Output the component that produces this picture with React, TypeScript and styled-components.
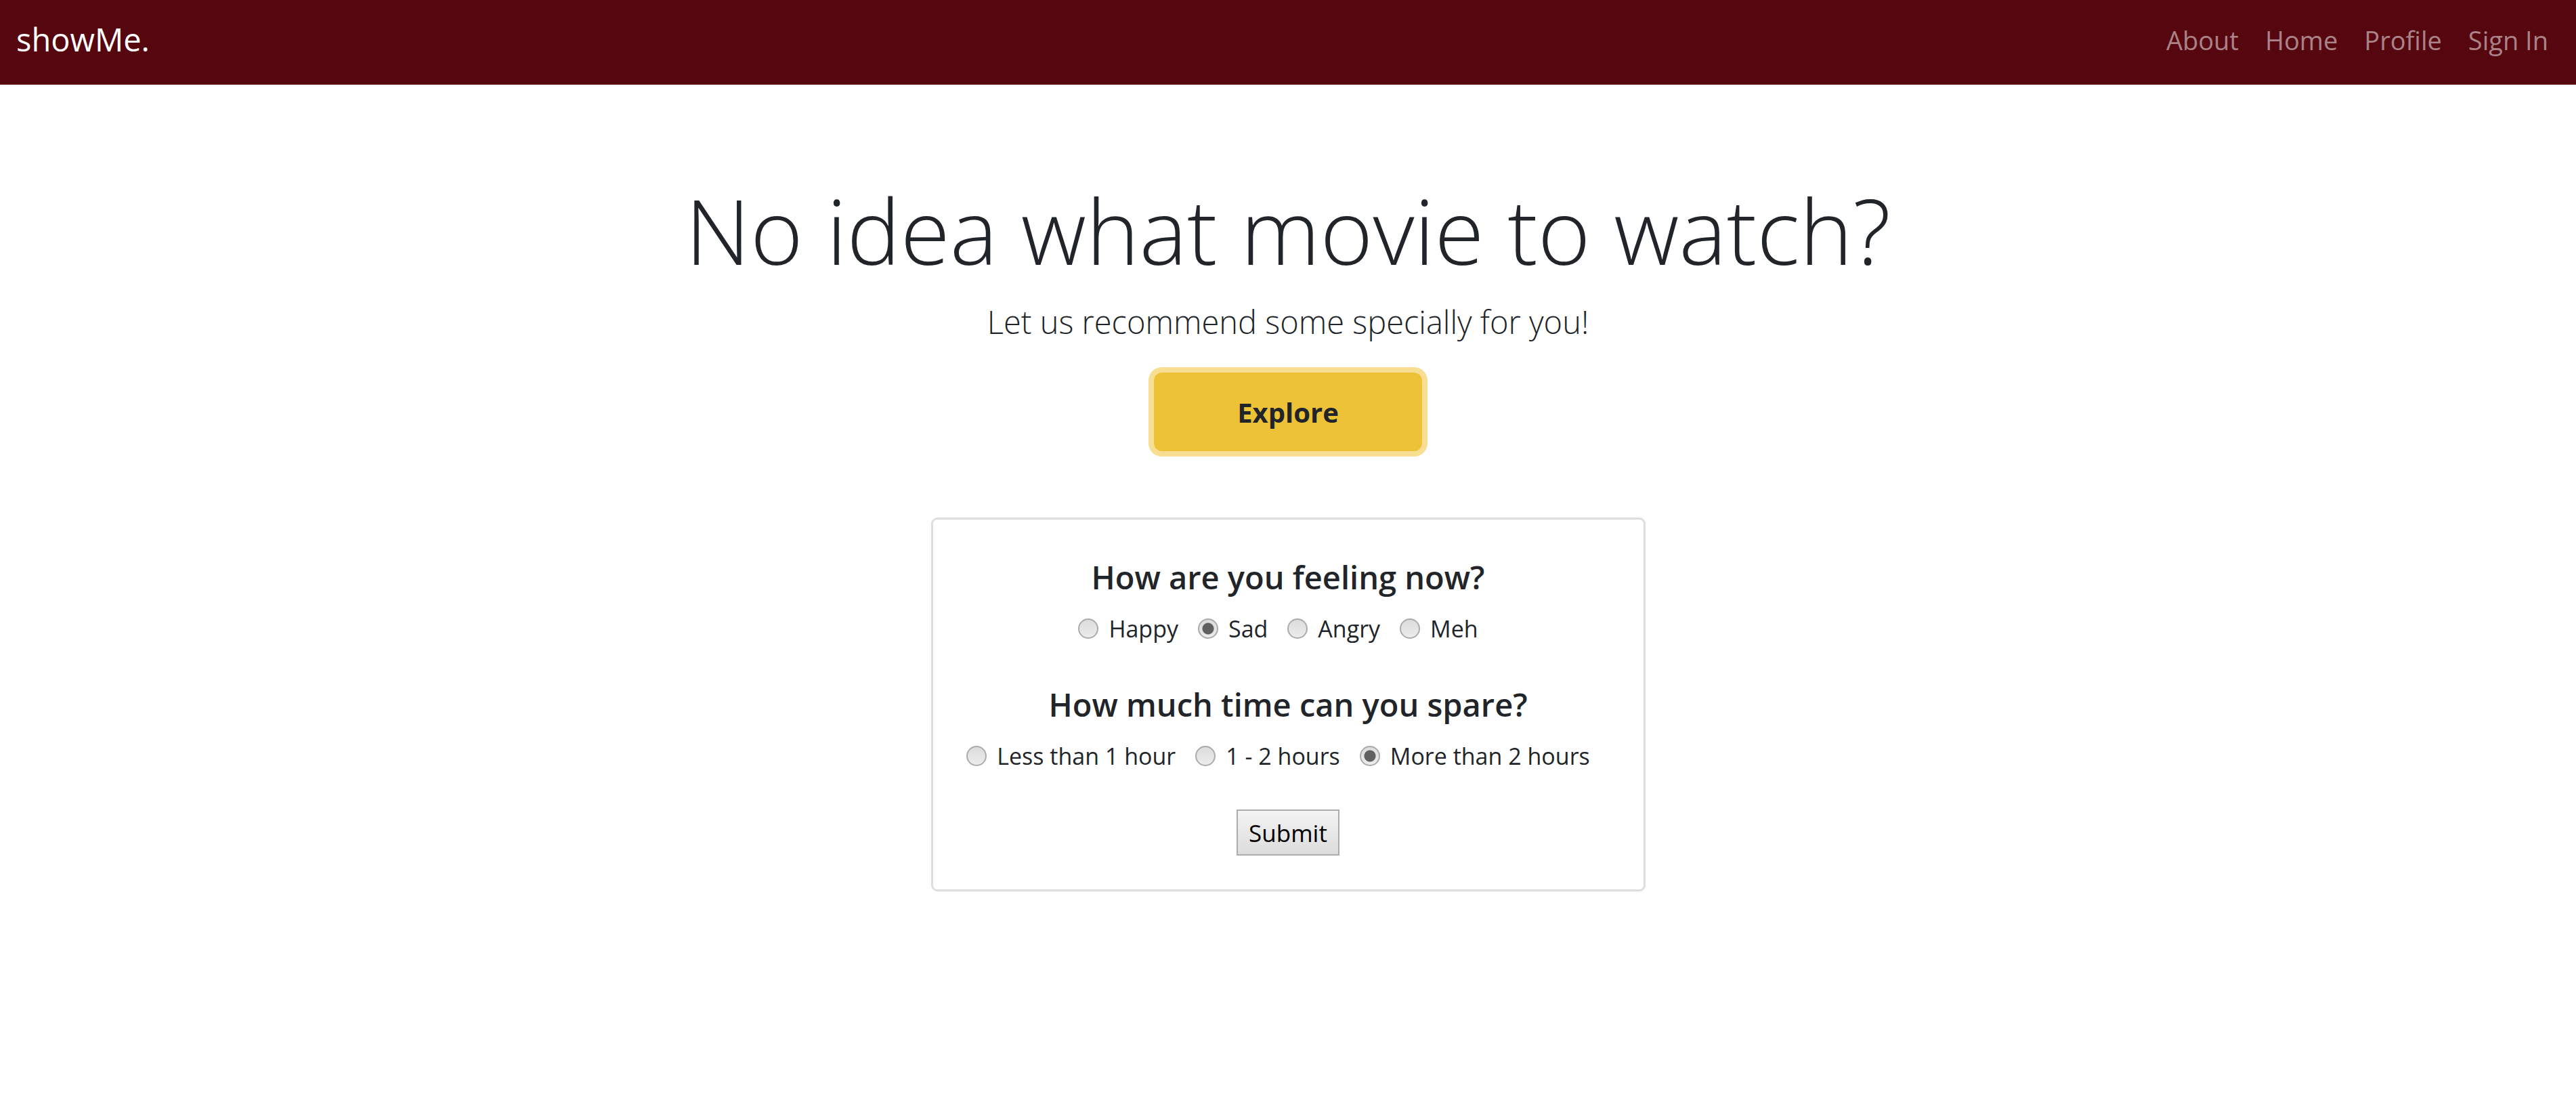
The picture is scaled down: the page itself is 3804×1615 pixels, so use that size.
import React from 'react';
import styled, { createGlobalStyle } from 'styled-components';

const GlobalStyle = createGlobalStyle`
	html,
	body {
		margin: 0;
		padding: 0;
		background: #ffffff;
	}

	body {
		font-family: 'Open Sans', 'Noto Sans', 'Liberation Sans', sans-serif;
		color: #212529;
	}

	* {
		box-sizing: border-box;
	}
`;

const moods = ['Happy', 'Sad', 'Angry', 'Meh'];
const durations = ['Less than 1 hour', '1 - 2 hours', 'More than 2 hours'];

type ChoiceRowProps = {
	name: string;
	options: string[];
	selected: string;
};

const ChoiceRow = ({ name, options, selected }: ChoiceRowProps) => (
	<Choices>
		{options.map((option) => (
			<Choice key={option}>
				<Radio type="radio" name={name} defaultChecked={option === selected} />
				<ChoiceLabel>{option}</ChoiceLabel>
			</Choice>
		))}
	</Choices>
);

const App = () => {
	return (
		<>
			<GlobalStyle />
			<Navbar>
				<Brand href="#">showMe.</Brand>
				<NavLinks>
					<NavLink href="#">About</NavLink>
					<NavLink href="#">Home</NavLink>
					<NavLink href="#">Profile</NavLink>
					<NavLink href="#">Sign In</NavLink>
				</NavLinks>
			</Navbar>
			<Main>
				<Headline>No idea what movie to watch?</Headline>
				<Lead>Let us recommend some specially for you!</Lead>
				<ExploreButton type="button">Explore</ExploreButton>
				<QuizCard>
					<Question>How are you feeling now?</Question>
					<ChoiceRow name="mood" options={moods} selected="Sad" />
					<Question $spaced>How much time can you spare?</Question>
					<ChoiceRow name="time" options={durations} selected="More than 2 hours" />
					<SubmitButton type="submit">Submit</SubmitButton>
				</QuizCard>
			</Main>
		</>
	);
};

const Navbar = styled.nav`
	height: 125px;
	display: flex;
	align-items: center;
	justify-content: space-between;
	padding: 0 41px 0 24px;
	background: #55060f;
`;

const Brand = styled.a`
	font-size: 47px;
	line-height: 1;
	color: #ffffff;
	text-decoration: none;
	margin-top: -8px;
`;

const NavLinks = styled.div`
	display: flex;
	gap: 39px;
`;

const NavLink = styled.a`
	font-size: 38px;
	line-height: 1;
	color: rgba(255, 255, 255, 0.5);
	text-decoration: none;
	margin-top: -8px;
`;

const Main = styled.main`
	display: flex;
	flex-direction: column;
	align-items: center;
	padding-top: 133px;
`;

const Headline = styled.h1`
	margin: 0;
	font-size: 133px;
	font-weight: 300;
	line-height: 163px;
`;

const Lead = styled.p`
	margin: 18px 0 0;
	font-size: 47px;
	font-weight: 300;
	line-height: 73px;
`;

const ExploreButton = styled.button`
	width: 396px;
	height: 116px;
	margin-top: 38px;
	border: none;
	border-radius: 12px;
	background: #eec236;
	box-shadow: 0 0 0 8px #f7de92;
	font-family: inherit;
	font-size: 40px;
	font-weight: 700;
	color: #212529;
	cursor: pointer;
`;

const QuizCard = styled.form`
	width: 1055px;
	margin-top: 98px;
	padding: 56px 0 50px;
	display: flex;
	flex-direction: column;
	align-items: center;
	border: 3px solid #dedede;
	border-radius: 9px;
`;

const Question = styled.h5<{ $spaced?: boolean }>`
	margin: ${(props) => (props.$spaced ? '54px' : '0')} 0 18px;
	font-size: 47px;
	font-weight: 600;
	line-height: 58px;
`;

const Choices = styled.div`
	display: flex;
	justify-content: center;
`;

const Choice = styled.label`
	display: flex;
	align-items: center;
	margin-right: 29px;
	height: 58px;
`;

const Radio = styled.input`
	appearance: none;
	width: 30px;
	height: 30px;
	margin: 0 15px 0 0;
	border: 2px solid #ababab;
	border-radius: 50%;
	background: linear-gradient(180deg, #dcdcdc 0%, #ececec 100%);

	&:checked {
		background: radial-gradient(circle, #606060 0 8px, transparent 9px),
			linear-gradient(180deg, #dcdcdc 0%, #ececec 100%);
	}
`;

const ChoiceLabel = styled.span`
	font-size: 34px;
	line-height: 58px;
`;

const SubmitButton = styled.button`
	width: 152px;
	height: 68px;
	margin-top: 50px;
	padding: 0;
	border: 2px solid #adadad;
	border-radius: 0;
	background: linear-gradient(180deg, #f4f4f4 0%, #dcdcdc 100%);
	font-family: inherit;
	font-size: 35px;
	color: #000000;
`;

export default App;
